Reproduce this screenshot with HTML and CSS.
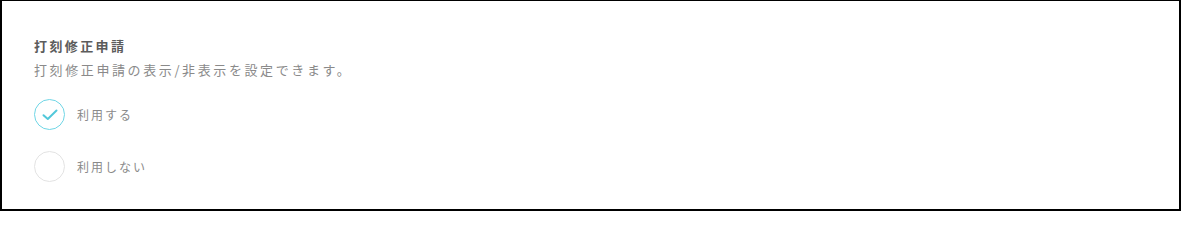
FILE: index.html
```html
<!DOCTYPE html>
<html lang="ja">
<head>
<meta charset="utf-8">
<link rel="stylesheet" href="styles.css">
</head>
<body>
<div class="frame">
  <section class="setting">
    <h2 class="setting-title">打刻修正申請</h2>
    <p class="setting-desc">打刻修正申請の表示/非表示を設定できます。</p>
    <div class="options">
      <label class="option">
        <span class="radio radio-on">
          <svg width="16" height="12" viewBox="0 0 16 12"><path d="M1.5 6.2 L5.8 10 L14.5 1.5" fill="none" stroke="#52c8da" stroke-width="2" stroke-linecap="round" stroke-linejoin="round"/></svg>
        </span>
        <span class="option-label">利用する</span>
      </label>
      <label class="option">
        <span class="radio"></span>
        <span class="option-label">利用しない</span>
      </label>
    </div>
  </section>
</div>
</body>
</html>
```
FILE: styles.css
```css
html, body {
  margin: 0;
  padding: 0;
  background: #fff;
}
body {
  font-family: "Noto Sans CJK JP", "Noto Sans", sans-serif;
}
.frame {
  box-sizing: border-box;
  width: 1181px;
  height: 211px;
  border: 2px solid #000;
  border-top-width: 1px;
  padding: 35px 32px 0 32px;
}
.setting-title {
  margin: 0;
  font-size: 13px;
  line-height: 20px;
  font-weight: 700;
  letter-spacing: 2.4px;
  color: #5c5c5c;
}
.setting-desc {
  margin: 4px 0 0 0;
  font-size: 13px;
  line-height: 20px;
  letter-spacing: 2.6px;
  color: #8a8a8a;
}
.options {
  margin-top: 19px;
  display: flex;
  flex-direction: column;
  gap: 21px;
}
.option {
  display: flex;
  align-items: center;
  gap: 12px;
}
.radio {
  box-sizing: border-box;
  width: 31px;
  height: 31px;
  border-radius: 50%;
  border: 1px solid #e3e3e3;
  display: flex;
  align-items: center;
  justify-content: center;
}
.radio-on {
  border-color: #6fd6e6;
}
.radio-on svg {
  margin-top: 1px;
}
.option-label {
  font-size: 12px;
  letter-spacing: 2px;
  color: #8a8a8a;
}
```
